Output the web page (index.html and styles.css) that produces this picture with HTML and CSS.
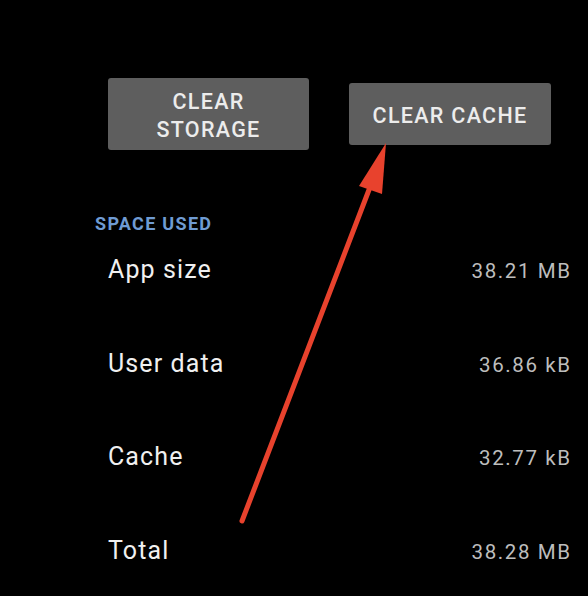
FILE: index.html
```html
<!DOCTYPE html>
<html>
<head>
<meta charset="utf-8">
<link rel="stylesheet" href="styles.css">
</head>
<body>
<div class="screen">
  <div class="actions">
    <div class="btn btn-tall">CLEAR<br>STORAGE</div>
    <div class="btn btn-short">CLEAR CACHE</div>
  </div>
  <div class="section-title">SPACE USED</div>
  <div class="rows">
    <div class="row"><span class="label">App size</span><span class="value">38.21 MB</span></div>
    <div class="row"><span class="label">User data</span><span class="value">36.86 kB</span></div>
    <div class="row"><span class="label">Cache</span><span class="value">32.77 kB</span></div>
    <div class="row"><span class="label">Total</span><span class="value">38.28 MB</span></div>
  </div>
  <svg class="arrow" width="588" height="596" viewBox="0 0 588 596">
    <line x1="242" y1="521" x2="372" y2="182" stroke="#e8422d" stroke-width="5" stroke-linecap="round"/>
    <polygon points="386,143 359,186 382,194" fill="#e8422d"/>
  </svg>
</div>
</body>
</html>
```
FILE: styles.css
```css
html, body {
  margin: 0;
  padding: 0;
  background: #000;
}
.screen {
  position: relative;
  width: 588px;
  height: 596px;
  overflow: hidden;
  font-family: Roboto, "Liberation Sans", sans-serif;
}
.actions {
  display: flex;
  align-items: center;
  gap: 40px;
  padding: 78px 0 0 108px;
}
.btn {
  box-sizing: border-box;
  background: #5e5e5e;
  color: #ececec;
  border-radius: 3px;
  font-size: 21.5px;
  font-weight: 500;
  letter-spacing: 1.3px;
  text-align: center;
  display: flex;
  align-items: center;
  justify-content: center;
  line-height: 28px;
  padding-top: 4px;
}
.btn-tall {
  width: 201px;
  height: 72px;
}
.btn-short {
  width: 202px;
  height: 62px;
}
.section-title {
  margin: 64px 0 0 95px;
  color: #6f9bd3;
  font-size: 18px;
  font-weight: 700;
  letter-spacing: 1.3px;
  line-height: 20px;
}
.rows {
  display: flex;
  flex-direction: column;
  padding: 0 18px 0 108px;
  margin-top: 16px;
}
.row {
  display: flex;
  justify-content: space-between;
  align-items: baseline;
  height: 93.5px;
  line-height: 40px;
}
.label {
  color: #f0f0f0;
  font-size: 25px;
  letter-spacing: 1.1px;
}
.value {
  color: #bdbdbd;
  font-size: 20.5px;
  letter-spacing: 1.6px;
  margin-right: -1.6px;
}
.arrow {
  position: absolute;
  left: 0;
  top: 0;
}
```
